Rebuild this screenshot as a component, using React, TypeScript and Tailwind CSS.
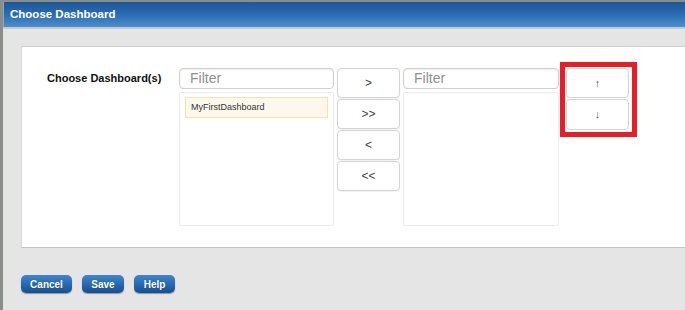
import React from 'react';

const font = { fontFamily: '"Liberation Sans", Arial, sans-serif' };

function MoveButton({ label }: { label: string }) {
  return (
    <button className="h-[30px] w-[63px] rounded-[4px] border border-[#d4d4d4] bg-white text-[12px] text-[#444] shadow-[0_1px_1px_rgba(0,0,0,0.05)]">
      {label}
    </button>
  );
}

function ListColumn({ items, width }: { items: string[]; width: string }) {
  return (
    <div className={`flex flex-col gap-[3px] ${width}`}>
      <input
        placeholder="Filter"
        className="h-[21px] w-full rounded-[4px] border border-[#cfcfcf] px-[10px] text-[14px] text-[#333] outline-none shadow-[inset_0_1px_2px_rgba(0,0,0,0.08)] placeholder:text-[#8f8f8f]"
        style={font}
      />
      <div className="h-[134px] w-full rounded-[2px] border border-[#ececec] bg-white px-[5px] pt-[4px]">
        {items.map((it) => (
          <div
            key={it}
            className="flex h-[21px] items-center border border-[#f3e3a6] bg-[#fcf9ec] px-[5px] text-[9px] text-[#333]"
          >
            {it}
          </div>
        ))}
      </div>
    </div>
  );
}

function FooterButton({ label, width }: { label: string; width: string }) {
  return (
    <button
      className={`h-[18px] ${width} rounded-[5px] bg-gradient-to-b from-[#3f86cf] to-[#134f92] text-[10px] font-bold text-white shadow-[0_1px_1px_rgba(0,0,0,0.35)] [text-shadow:0_0_1px_rgba(0,0,0,0.3)]`}
    >
      {label}
    </button>
  );
}

export default function App() {
  return (
    <div className="h-[310px] w-[685px] overflow-hidden bg-[#8a8e88] pl-[3px] pt-[2px]" style={font}>
      <div className="flex h-full flex-col bg-[#e5e5e5]">
        {/* title bar */}
        <div className="flex h-[25px] items-center border-l border-[#8aa6c6] bg-gradient-to-b from-[#1b5698] via-[#2c6cb0] to-[#4a90d0] pl-[6px] text-[11.5px] font-bold text-white">
          Choose Dashboard
        </div>
        <div className="h-[2px] bg-[#c9c9c9]" />

        {/* body */}
        <div className="flex flex-1 flex-col pl-[18px] pt-[17px]">
          <div className="flex h-[202px] border-y border-l border-t-[#d0d0d0] border-b-[#c4c4c4] border-l-[#d8d8d8] bg-white pt-[21px]">
            <div className="w-[157px] pl-[25px] pt-[2px] text-[11px] font-bold text-[#111]">
              Choose Dashboard(s)
            </div>
            <ListColumn items={['MyFirstDashboard']} width="w-[155px]" />
            <div className="ml-[3px] flex flex-col gap-[1px]">
              <MoveButton label=">" />
              <MoveButton label=">>" />
              <MoveButton label="<" />
              <MoveButton label="<<" />
            </div>
            <div className="ml-[3px]">
              <ListColumn items={[]} width="w-[156px]" />
            </div>
            <div className="-mt-[6px] ml-[1px] h-[75px] w-[77px] border-[5px] border-[#ec1c24] pl-[1px] pt-[1px]">
              <div className="flex flex-col gap-[1px]">
                <button className="h-[30px] w-[63px] rounded-[4px] border border-[#d4d4d4] bg-white text-[11px] text-[#555]">
                  ↑
                </button>
                <button className="h-[31px] w-[63px] rounded-[4px] border border-[#d4d4d4] bg-white text-[11px] text-[#555]">
                  ↓
                </button>
              </div>
            </div>
          </div>

          {/* footer buttons */}
          <div className="mt-[27px] flex gap-[10px]">
            <FooterButton label="Cancel" width="w-[51px]" />
            <FooterButton label="Save" width="w-[42px]" />
            <FooterButton label="Help" width="w-[41px]" />
          </div>
        </div>
      </div>
    </div>
  );
}
